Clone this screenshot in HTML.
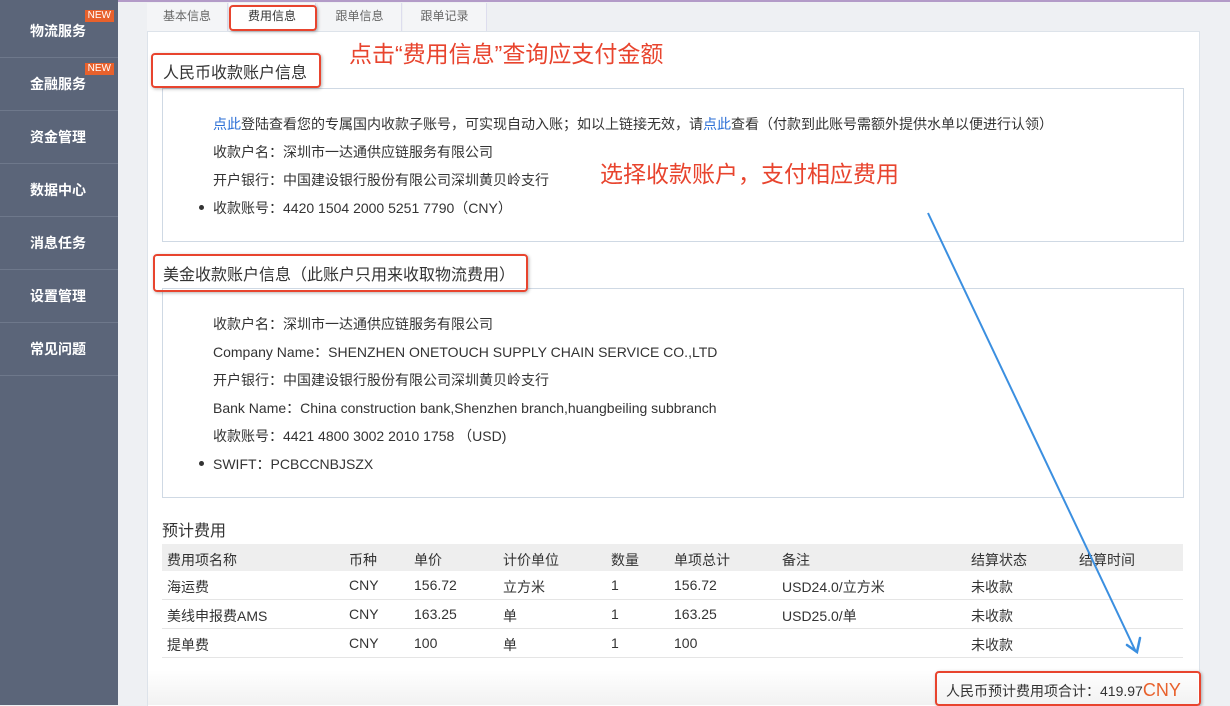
<!DOCTYPE html><html><head><meta charset="utf-8"><style>
body{margin:0;width:1230px;height:705px;overflow:hidden;background:#eef0f3;font-family:"Liberation Sans","Noto Sans CJK SC",sans-serif;font-size:14px;color:#333;position:relative}
.abs{position:absolute}
#side{left:0;top:0;width:118px;height:705px;background:#5b6579}
.it{position:absolute;left:0;width:118px;height:52px;border-bottom:1px solid #6e788b;color:#fff;font-weight:bold;font-size:14px;line-height:52px;text-indent:30px}
.new{position:absolute;right:4px;top:5px;background:#e8612c;color:#fff;font-size:10px;line-height:12px;padding:0 3px;text-indent:0;font-weight:normal}
#main{left:147px;top:31px;width:1051px;height:674px;background:#fff;border:1px solid #dde3ea;border-bottom:none}
.tab{position:absolute;top:3px;height:28px;line-height:26px;font-size:12px;color:#666;text-align:center;background:#f4f5f7;border-right:1px solid #dde}
.red{position:absolute;border:2px solid #e8442e;border-radius:4px;box-shadow:1px 1px 3px rgba(0,0,0,.3)}
.box{position:absolute;left:162px;width:1020px;border:1px solid #cfd9e4}
.ln{position:absolute;left:213px;font-size:14px;white-space:nowrap}
.dot{position:absolute;left:199px;width:5px;height:5px;border-radius:50%;background:#333}
.ann{position:absolute;color:#e8442e;font-size:23px;white-space:nowrap}
.tr{position:absolute;left:162px;width:1021px;height:28px;border-bottom:1px solid #e5e5e5}
.tr span{position:absolute;top:6px;white-space:nowrap}
</style></head><body>
<div class="abs" style="left:0;top:0;width:1230px;height:2px;background:#b39bc8"></div>
<div id="side" class="abs">
<div class="it" style="top:5px">物流服务<span class="new">NEW</span></div>
<div class="it" style="top:58px">金融服务<span class="new">NEW</span></div>
<div class="it" style="top:111px">资金管理</div>
<div class="it" style="top:164px">数据中心</div>
<div class="it" style="top:217px">消息任务</div>
<div class="it" style="top:270px">设置管理</div>
<div class="it" style="top:323px">常见问题</div>
</div>
<div class="tab" style="left:147px;width:80px">基本信息</div>
<div class="tab" style="left:229px;width:86px;background:#fff;color:#333">费用信息</div>
<div class="tab" style="left:318px;width:83px">跟单信息</div>
<div class="tab" style="left:403px;width:83px">跟单记录</div>
<div id="main" class="abs"></div>
<div class="red" style="left:229px;top:5px;width:84px;height:22px"></div>
<div class="ann" style="left:349px;top:35px">点击“费用信息”查询应支付金额</div>
<div class="box" style="top:88px;height:152px"></div>
<div class="red" style="left:151px;top:53px;width:166px;height:31px"></div>
<div class="abs" style="left:163px;top:59px;font-size:16px">人民币收款账户信息</div>
<div class="ln" style="top:114px"><span style="color:#2b6fd6">点此</span>登陆查看您的专属国内收款子账号，可实现自动入账；如以上链接无效，请<span style="color:#2b6fd6">点此</span>查看（付款到此账号需额外提供水单以便进行认领）</div>
<div class="ln" style="top:142px">收款户名：深圳市一达通供应链服务有限公司</div>
<div class="ln" style="top:170px">开户银行：中国建设银行股份有限公司深圳黄贝岭支行</div>
<div class="dot" style="top:205px"></div>
<div class="ln" style="top:198px">收款账号：4420 1504 2000 5251 7790（CNY）</div>
<div class="ann" style="left:600px;top:155px">选择收款账户，支付相应费用</div>
<div class="box" style="top:288px;height:208px"></div>
<div class="red" style="left:153px;top:254px;width:371px;height:34px"></div>
<div class="abs" style="left:163px;top:261px;font-size:16px">美金收款账户信息（此账户只用来收取物流费用）</div>
<div class="ln" style="top:314px">收款户名：深圳市一达通供应链服务有限公司</div>
<div class="ln" style="top:342px">Company Name：SHENZHEN ONETOUCH SUPPLY CHAIN SERVICE CO.,LTD</div>
<div class="ln" style="top:370px">开户银行：中国建设银行股份有限公司深圳黄贝岭支行</div>
<div class="ln" style="top:398px">Bank Name：China construction bank,Shenzhen branch,huangbeiling subbranch</div>
<div class="ln" style="top:426px">收款账号：4421 4800 3002 2010 1758 （USD)</div>
<div class="dot" style="top:461px"></div>
<div class="ln" style="top:454px">SWIFT：PCBCCNBJSZX</div>
<div class="abs" style="left:162px;top:517px;font-size:16px">预计费用</div>
<div class="tr" style="top:544px;background:#eee;border:none;height:27px"><span style="left:5px">费用项名称</span><span style="left:187px">币种</span><span style="left:252px">单价</span><span style="left:341px">计价单位</span><span style="left:449px">数量</span><span style="left:512px">单项总计</span><span style="left:620px">备注</span><span style="left:809px">结算状态</span><span style="left:917px">结算时间</span></div>
<div class="tr" style="top:571px"><span style="left:5px">海运费</span><span style="left:187px">CNY</span><span style="left:252px">156.72</span><span style="left:341px">立方米</span><span style="left:449px">1</span><span style="left:512px">156.72</span><span style="left:620px">USD24.0/立方米</span><span style="left:809px">未收款</span></div>
<div class="tr" style="top:600px"><span style="left:5px">美线申报费AMS</span><span style="left:187px">CNY</span><span style="left:252px">163.25</span><span style="left:341px">单</span><span style="left:449px">1</span><span style="left:512px">163.25</span><span style="left:620px">USD25.0/单</span><span style="left:809px">未收款</span></div>
<div class="tr" style="top:629px"><span style="left:5px">提单费</span><span style="left:187px">CNY</span><span style="left:252px">100</span><span style="left:341px">单</span><span style="left:449px">1</span><span style="left:512px">100</span><span style="left:809px">未收款</span></div>
<div class="abs" style="left:148px;top:670px;width:1050px;height:35px;background:linear-gradient(#fff,#f2f2f2)"></div>
<div class="red" style="left:935px;top:671px;width:262px;height:31px"></div>
<div class="abs" style="left:946px;top:680px;font-size:14px;white-space:nowrap">人民币预计费用项合计：419.97<span style="color:#e8612c;font-size:18px">CNY</span></div>
<svg class="abs" style="left:0;top:0" width="1230" height="705"><line x1="928" y1="213" x2="1136" y2="652" stroke="#3b8fe0" stroke-width="2"/><polyline points="1127,645 1137,652 1140,638" fill="none" stroke="#3b8fe0" stroke-width="2.5" stroke-linecap="round"/></svg>
</body></html>
